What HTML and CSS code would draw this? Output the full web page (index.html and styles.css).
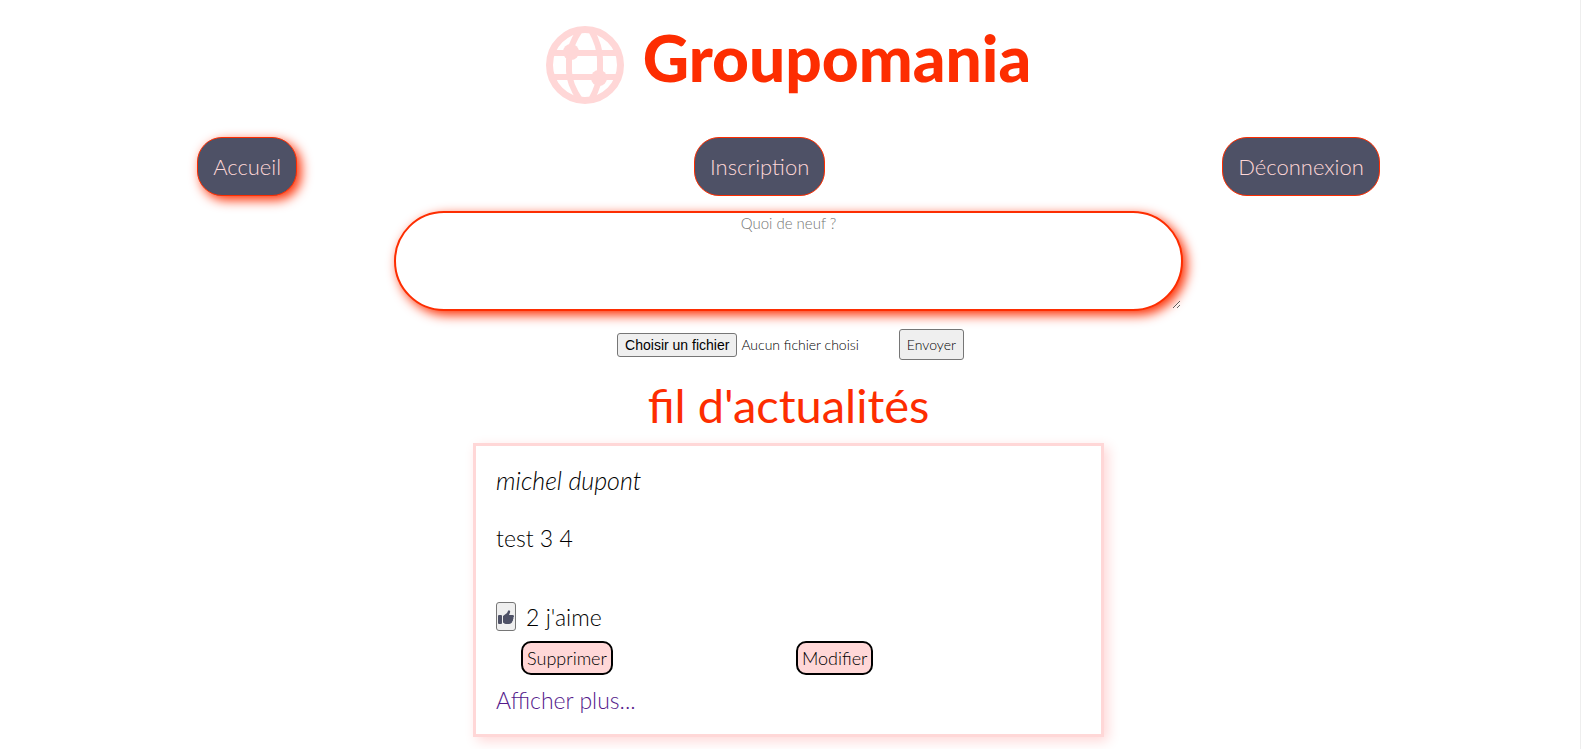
FILE: index.html
```html
<!DOCTYPE html>
<html lang="fr">
<head>
<meta charset="utf-8">
<title>Groupomania</title>
<link rel="stylesheet" href="styles.css">
</head>
<body>
<header class="header">
  <h1 class="brand">
    <svg class="brand-icon" viewBox="0 0 78 78" aria-hidden="true">
      <g fill="none" stroke="currentColor" stroke-width="6">
        <circle cx="39" cy="39" r="35.500" stroke-width="7"/>
        <path d="M7 27H71M7 51H71"/>
        <path d="M34 4C28 13 23 22 23 33V45C23 56 28 65 34 74M45 4C50 13 54 22 54 33V45C54 56 50 65 45 74"/>
      </g>
      <g fill="currentColor">
        <circle cx="25" cy="26" r="8"/>
        <circle cx="53" cy="52" r="8"/>
        <path d="M31 2H47V7H31ZM31 71H47V76H31Z"/>
      </g>
    </svg>
    <span>Groupomania</span>
  </h1>
  <nav class="nav">
    <a class="nav-link nav-link-active" href="#accueil">Accueil</a>
    <a class="nav-link" href="#inscription">Inscription</a>
    <a class="nav-link" href="#deconnexion">Déconnexion</a>
  </nav>
</header>
<main class="main">
  <form class="post-form">
    <textarea class="post-text" placeholder="Quoi de neuf ?" aria-label="Quoi de neuf ?"></textarea>
    <div class="post-tools">
      <div class="file-field">
        <input class="file-input" type="file" id="fichier">
        <label class="file-button" for="fichier">Choisir un fichier</label>
        <span>Aucun fichier choisi</span>
      </div>
      <button class="send" type="button">Envoyer</button>
    </div>
  </form>
  <h2 class="feed-title">fil d'actualités</h2>
  <article class="card">
    <p class="author">michel dupont</p>
    <p class="message">test 3 4</p>
    <div class="likes">
      <button class="like" type="button" aria-label="J'aime">
        <svg class="like-icon" viewBox="0 0 16 16" aria-hidden="true"><path fill="currentColor" d="M1 6H3Q4 6 4 7V14Q4 15 3 15H1Q0 15 0 14V7Q0 6 1 6ZM5 7L9 4L10 2Q10.500 1 11.500 1.500Q12.500 2 12 3.500L11 6H14.500Q16 6 16 7.300Q16 8 15.300 8.500Q15.800 9.500 15 10.500Q15.300 11.500 14.300 12.300Q14.500 13.500 13 14.200Q12.500 15 11 15H8Q7 15 5 13.500Z"/></svg>
      </button>
      <span>2 j'aime</span>
    </div>
    <div class="actions">
      <button class="action" type="button">Supprimer</button>
      <button class="action" type="button">Modifier</button>
    </div>
    <a class="more" href="#plus">Afficher plus...</a>
  </article>
</main>
</body>
</html>
```
FILE: styles.css
```css
* {
  box-sizing: border-box;
}

body {
  margin: 0;
  padding-right: 3px;
  border-right: 1px solid #eeeeee;
  min-height: 100vh;
  background: #ffffff;
  color: #000000;
  font-family: Lato, sans-serif;
  font-weight: 300;
}

button,
textarea {
  font-family: inherit;
  font-weight: inherit;
}

.header {
  display: flex;
  flex-direction: column;
  align-items: center;
}

.brand {
  display: flex;
  align-items: center;
  gap: 19px;
  margin: 0;
  padding: 26px 0 33px;
  color: #fd2d01;
  font-size: 64px;
  font-weight: 900;
  line-height: 78px;
}

.brand span {
  padding-bottom: 14px;
  line-height: 64px;
}

.brand-icon {
  width: 78px;
  height: 78px;
  color: #ffd7d7;
}

.nav {
  display: flex;
  justify-content: space-between;
  width: 75%;
}

.nav-link {
  padding: 15px;
  border: 1px solid #fd2d01;
  border-radius: 25px;
  background: #4e5166;
  color: #ffd7d7;
  font-size: 22px;
  line-height: 27px;
  text-decoration: none;
}

.nav-link-active {
  box-shadow: 4px 4px 12px #fd2d01;
}

.main,
.post-form {
  display: flex;
  flex-direction: column;
  align-items: center;
}

.post-form {
  width: 100%;
  padding-top: 15px;
}

.post-text {
  width: 50%;
  height: 100px;
  padding: 0;
  border: 2px solid #fd2d01;
  border-radius: 50px;
  box-shadow: 4px 4px 12px #fd2d01;
  font-size: 15px;
  line-height: 20px;
  text-align: center;
}

.post-text::placeholder {
  color: #757575;
}

.post-tools {
  display: flex;
  align-items: center;
  gap: 40px;
  padding: 18px 0 0 4px;
}

.file-field {
  position: relative;
  display: flex;
  align-items: center;
  gap: 4px;
  font-size: 14px;
}

.file-input {
  position: absolute;
  width: 120px;
  opacity: 0;
}

.file-button,
.send,
.like {
  border: 1px solid #767676;
  border-radius: 3px;
  background: #efefef;
}

.file-button {
  padding: 2px 7px;
  font: 14px/18px "Liberation Sans", Arial, sans-serif;
}

.send {
  padding: 7px;
  font-size: 14px;
  line-height: 15px;
}

.feed-title {
  margin: 16px 0 9px;
  color: #fd2d01;
  font-size: 47px;
  font-weight: 400;
  line-height: 58px;
}

.card {
  width: 40%;
  padding: 20px;
  border: 3px solid #ffd7d7;
  box-shadow: 4px 4px 12px #ffd7d7;
  font-size: 23px;
  line-height: 28px;
}

.author,
.message {
  margin: 0 0 30px;
}

.author {
  font-size: 25px;
  font-style: italic;
}

.message {
  margin-bottom: 50px;
}

.likes {
  display: flex;
  align-items: center;
  gap: 10px;
}

.like {
  display: flex;
  align-items: center;
  justify-content: center;
  width: 20px;
  height: 29px;
  padding: 0;
}

.like-icon {
  flex: none;
  width: 16px;
  height: 16px;
  color: #4e5166;
}

.actions {
  display: grid;
  grid-template-columns: 1fr 1fr;
  justify-items: start;
  padding: 10px 10px 11px 25px;
}

.action {
  padding: 4px;
  border: 2px solid #000000;
  border-radius: 10px;
  background: #ffd7d7;
  font-size: 18px;
  line-height: 22px;
}

.more {
  color: #551a8b;
  text-decoration: none;
}
```
